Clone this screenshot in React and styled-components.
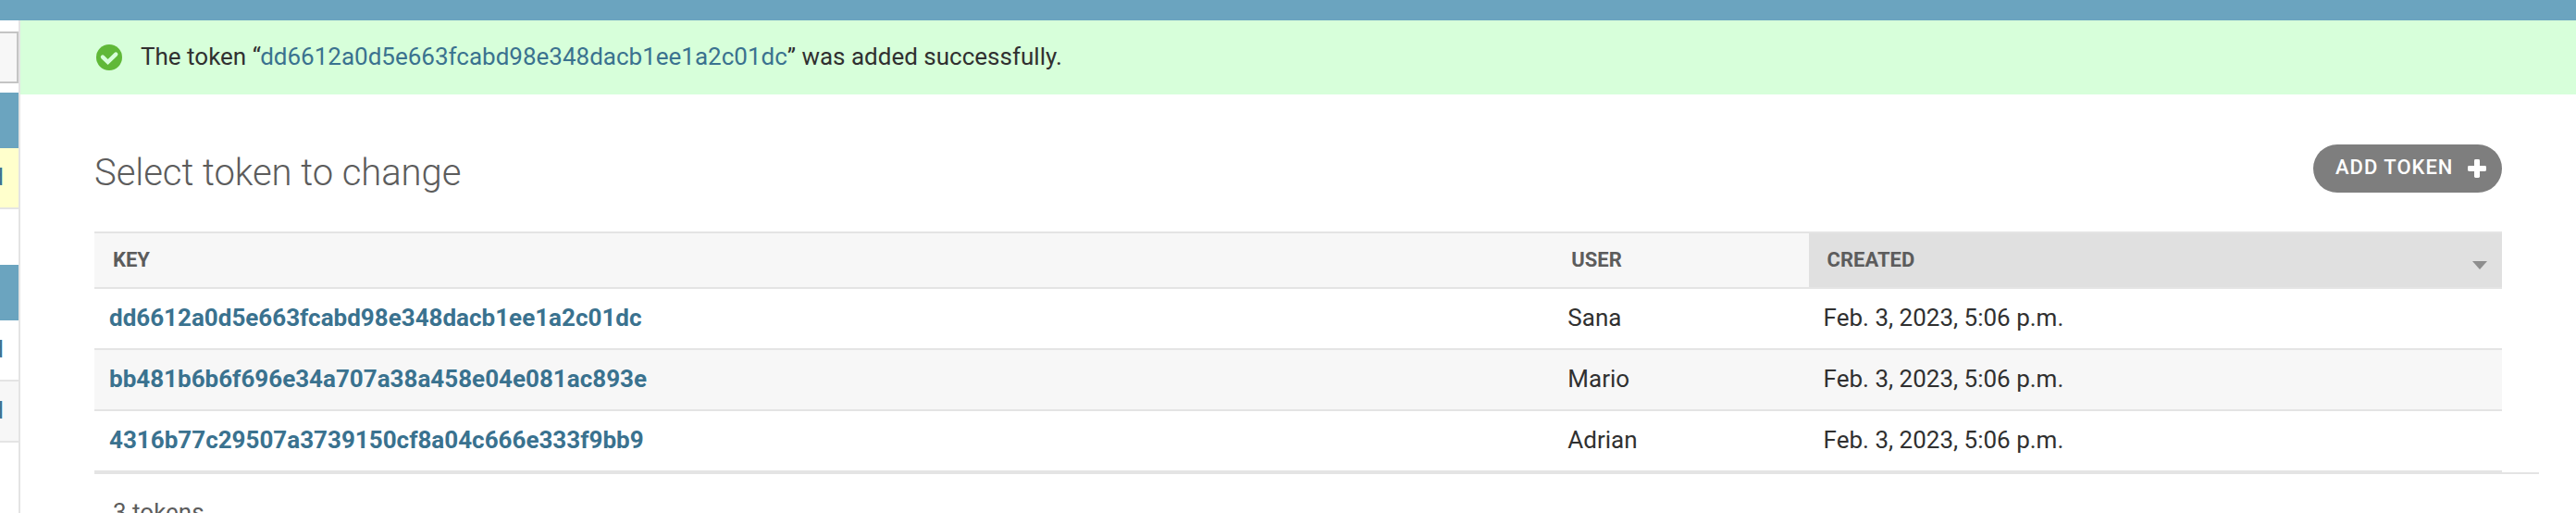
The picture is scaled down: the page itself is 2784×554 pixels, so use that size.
import React from "react";
import styled, { createGlobalStyle } from "styled-components";

const GlobalStyle = createGlobalStyle`
  * { box-sizing: border-box; }
  body {
    margin: 0;
    background: #fff;
    color: #303030;
    font-family: Roboto, "Liberation Sans", sans-serif;
    font-size: 26px;
    overflow: hidden;
  }
`;

const Page = styled.div`
  display: flex;
  flex-direction: column;
  height: 554px;
  overflow: hidden;
`;

const Breadcrumbs = styled.div`
  flex: none;
  height: 22px;
  background: #6ba4bf;
`;

const Main = styled.div`
  flex: 1;
  min-height: 0;
  display: flex;
`;

const Sidebar = styled.nav`
  flex: none;
  width: 22px;
  border-right: 2px solid #e4e4e4;
  overflow: hidden;
  padding-top: 12px;
`;

const FilterBox = styled.div`
  height: 56px;
  margin-bottom: 10px;
  border: 2px solid #c4c4c4;
  border-left: 0;
  background: #f7f7f7;
`;

const ModuleCaption = styled.div`
  height: 60px;
  background: #6ba4bf;
`;

const ModuleRow = styled.div`
  display: flex;
  justify-content: flex-end;
  align-items: center;
  height: 66px;
  padding: 0 16px 3px 0;
  border-bottom: 2px solid #e4e4e4;
  background: ${(p) => p.$bg || "#fff"};
`;

const ModuleGap = styled.div`
  height: 60px;
`;

const AddLink = styled.a`
  color: #3a728f;
  line-height: 30px;
`;

const Content = styled.main`
  flex: 1;
  min-width: 0;
  display: flex;
  flex-direction: column;
`;

const Message = styled.div`
  flex: none;
  display: flex;
  align-items: center;
  height: 80px;
  padding-left: 82px;
  gap: 20px;
  background: #d7ffda;
`;

const MessageText = styled.span`
  line-height: 30px;
  padding-bottom: 2px;
`;

const MessageLink = styled.a`
  color: #3a728f;
`;

const TitleBar = styled.div`
  flex: none;
  display: flex;
  justify-content: space-between;
  align-items: flex-start;
  height: 148px;
  padding: 54px 80px 0;
`;

const Title = styled.h1`
  margin: 7px 0 0;
  font-size: 40px;
  line-height: 48px;
  font-weight: 300;
  letter-spacing: -0.05px;
  color: #5c5c5c;
`;

const AddButton = styled.a`
  display: flex;
  align-items: center;
  justify-content: space-between;
  width: 204px;
  height: 52px;
  padding: 0 17px 0 24px;
  border-radius: 30px;
  background: #7e7e7e;
  color: #fff;
  font-size: 22px;
  line-height: 26px;
  font-weight: 500;
  letter-spacing: 1px;
  text-transform: uppercase;
  white-space: nowrap;
`;

const ButtonLabel = styled.span`
  padding-bottom: 3px;
`;

const Table = styled.div`
  flex: none;
  margin: 0 80px;
  border-top: 2px solid #e4e4e4;
`;

const Row = styled.div`
  display: grid;
  grid-template-columns: 1576.3px 276.3px 1fr;
  height: 66px;
  border-bottom: 2px solid #e4e4e4;
  background: ${(p) => (p.$striped ? "#f7f7f7" : "#fff")};
`;

const HeadRow = styled(Row)`
  height: 60px;
  background: #f7f7f7;
`;

const HeadCell = styled.div`
  display: flex;
  align-items: center;
  justify-content: space-between;
  padding: 0 16px 2px 20px;
  font-size: 22px;
  font-weight: 700;
  text-transform: uppercase;
  color: #5c5c5c;
  background: ${(p) => (p.$sorted ? "#e0e0e0" : "transparent")};
`;

const SortArrow = styled.svg`
  margin-top: 13px;
`;

const Cell = styled.div`
  padding: 16px;
  line-height: 30px;
`;

const KeyLink = styled.a`
  color: #3a728f;
  font-weight: 700;
`;

const Paginator = styled.div`
  flex: none;
  margin-right: 40px;
  margin-left: 80px;
  padding: 23px 20px 0;
  border-top: 2px solid #e4e4e4;
  line-height: 36px;
  color: #5c5c5c;
`;

const tokens = [
  { key: "dd6612a0d5e663fcabd98e348dacb1ee1a2c01dc", user: "Sana" },
  { key: "bb481b6b6f696e34a707a38a458e04e081ac893e", user: "Mario" },
  { key: "4316b77c29507a3739150cf8a04c666e333f9bb9", user: "Adrian" },
];

const SuccessIcon = () => (
  <svg width="28" height="28" viewBox="0 0 28 28">
    <circle cx="14" cy="14" r="14" fill="#60b838" />
    <path
      d="M7 13.6 L12.6 19 L21.2 10.6"
      fill="none"
      stroke="#d7ffda"
      strokeWidth="4.4"
      strokeLinecap="round"
      strokeLinejoin="miter"
    />
  </svg>
);

const PlusIcon = () => (
  <svg width="20" height="20" viewBox="0 0 20 20" fill="#fff">
    <rect x="7" y="0" width="6" height="20" rx="1.4" />
    <rect x="0" y="7" width="20" height="6" rx="1.4" />
  </svg>
);

export default function App() {
  return (
    <Page>
      <GlobalStyle />
      <Breadcrumbs />
      <Main>
        <Sidebar>
          <FilterBox />
          <ModuleCaption />
          <ModuleRow $bg="#ffffcc">
            <AddLink>Add</AddLink>
          </ModuleRow>
          <ModuleGap />
          <ModuleCaption />
          <ModuleRow>
            <AddLink>Add</AddLink>
          </ModuleRow>
          <ModuleRow $bg="#f7f7f7">
            <AddLink>Add</AddLink>
          </ModuleRow>
        </Sidebar>
        <Content>
          <Message>
            <SuccessIcon />
            <MessageText>
              The token “<MessageLink>{tokens[0].key}</MessageLink>” was added
              successfully.
            </MessageText>
          </Message>
          <TitleBar>
            <Title>Select token to change</Title>
            <AddButton>
              <ButtonLabel>Add token</ButtonLabel>
              <PlusIcon />
            </AddButton>
          </TitleBar>
          <Table>
            <HeadRow>
              <HeadCell>Key</HeadCell>
              <HeadCell>User</HeadCell>
              <HeadCell $sorted>
                Created
                <SortArrow width="16" height="9" viewBox="0 0 16 9">
                  <path d="M0 0H16L8 9Z" fill="#8e8e8e" />
                </SortArrow>
              </HeadCell>
            </HeadRow>
            {tokens.map((t, i) => (
              <Row key={t.key} $striped={i % 2 === 1}>
                <Cell>
                  <KeyLink>{t.key}</KeyLink>
                </Cell>
                <Cell>{t.user}</Cell>
                <Cell>Feb. 3, 2023, 5:06 p.m.</Cell>
              </Row>
            ))}
          </Table>
          <Paginator>3 tokens</Paginator>
        </Content>
      </Main>
    </Page>
  );
}
